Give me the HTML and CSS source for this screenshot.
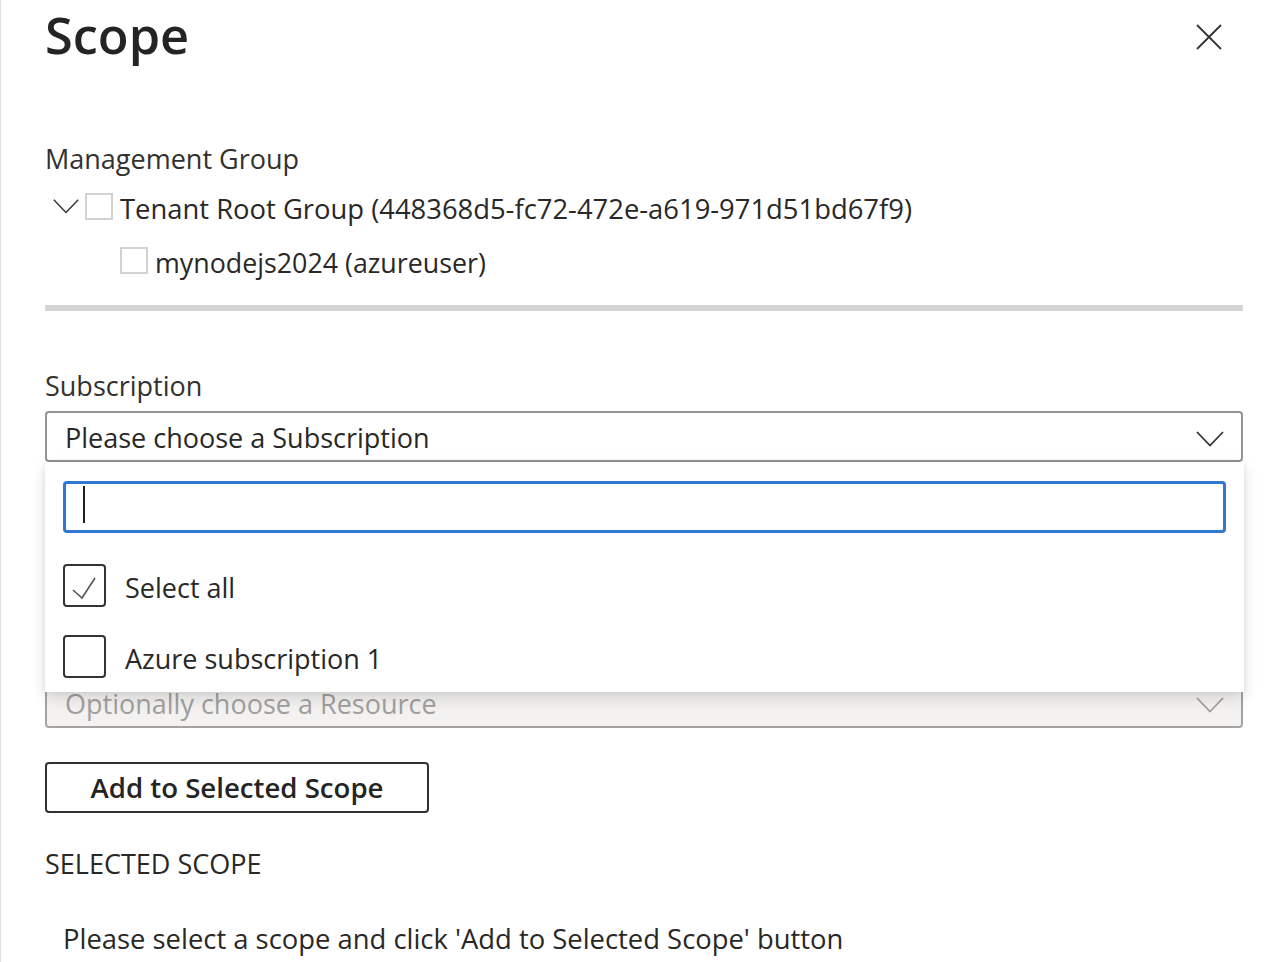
FILE: index.html
```html
<!DOCTYPE html>
<html lang="en">
<head>
<meta charset="utf-8">
<title>Scope</title>
<link rel="stylesheet" href="styles.css">
</head>
<body>
<div class="panel">
  <header class="header">
    <h1 class="title">Scope</h1>
    <button class="close" aria-label="Close">
      <svg width="26" height="26" viewBox="0 0 26 26"><path d="M1 1 L25 25 M25 1 L1 25" stroke="#333" stroke-width="1.8" fill="none"/></svg>
    </button>
  </header>

  <section class="mg">
    <div class="label">Management Group</div>
    <div class="tree">
      <div class="tree-row">
        <span class="toggle"><svg width="26" height="15" viewBox="0 0 26 15"><polyline points="0.8,0.8 13,13.5 25.2,0.8" stroke="#333" stroke-width="1.4" fill="none"/></svg></span>
        <span class="tcheck"></span>
        <span class="ttext">Tenant Root Group (448368d5-fc72-472e-a619-971d51bd67f9)</span>
      </div>
      <div class="tree-row child">
        <span class="tcheck"></span>
        <span class="ttext">mynodejs2024 (azureuser)</span>
      </div>
    </div>
  </section>

  <div class="separator"></div>

  <section class="field first">
    <div class="label">Subscription</div>
    <div class="combo">
      <div class="select">
        <span class="select-text">Please choose a Subscription</span>
        <svg class="chev" width="28" height="16" viewBox="0 0 28 16"><polyline points="1,1 14,14.5 27,1" stroke="#333" stroke-width="1.8" fill="none"/></svg>
      </div>
      <div class="dropdown">
        <div class="search"><span class="caret"></span></div>
        <div class="option">
          <span class="box checked"><svg width="39" height="39" viewBox="0 0 39 39"><polyline points="8,24 17,32 30,12" stroke="#555" stroke-width="1.6" fill="none"/></svg></span>
          <span class="opt-text">Select all</span>
        </div>
        <div class="option">
          <span class="box"></span>
          <span class="opt-text">Azure subscription 1</span>
        </div>
      </div>
    </div>
  </section>

  <section class="field resource">
    <div class="select disabled">
      <span class="select-text">Optionally choose a Resource</span>
      <svg class="chev" width="28" height="16" viewBox="0 0 28 16"><polyline points="1,1 14,14.5 27,1" stroke="#a19f9d" stroke-width="1.8" fill="none"/></svg>
    </div>
  </section>

  <button class="add-btn">Add to Selected Scope</button>

  <div class="section-head">SELECTED SCOPE</div>
  <p class="hint">Please select a scope and click 'Add to Selected Scope' button</p>
</div>
</body>
</html>
```

FILE: styles.css
```css
* { box-sizing: border-box; }

html, body {
  margin: 0;
  padding: 0;
  background: #ffffff;
}

body {
  font-family: "Open Sans", "Noto Sans", Arial, sans-serif;
  font-size: 27px;
  line-height: 36px;
  color: #292827;
}

.panel {
  border-left: 1px solid #e1e1e1;
  min-height: 962px;
  padding: 5px 35px 0 44px;
}

.header {
  display: flex;
  justify-content: space-between;
  align-items: flex-start;
}

.title {
  margin: 0;
  font-size: 50.5px;
  line-height: 60px;
  font-weight: 600;
  color: #252423;
}

.close {
  margin: 19px 21px 0 0;
  padding: 0;
  border: none;
  background: none;
  width: 26px;
  height: 26px;
  display: flex;
}

.mg { margin-top: 76px; }

.label {
  line-height: 36px;
  color: #323130;
}

.tree { margin-top: 14px; }

.tree-row {
  display: flex;
  align-items: flex-start;
  height: 36px;
}

.tree-row.child {
  margin-top: 18px;
  padding-left: 75px;
}

.toggle {
  width: 26px;
  height: 15px;
  margin: 8px 0 0 8px;
  display: flex;
}

.tcheck {
  width: 28px;
  height: 27px;
  margin-top: 2px;
  margin-left: 6px;
  border: 2px solid #d2d2d2;
  background: #fff;
  flex: none;
}

.tree-row.child .tcheck { margin-left: 0; }

.ttext {
  margin-left: 7px;
  white-space: nowrap;
  font-size: 27.4px;
}

.tree-row.child .ttext { font-size: 26.8px; }

.separator {
  margin-top: 24px;
  height: 6px;
  background: #d4d4d4;
}

.field.first { margin-top: 57px; }
.field.resource { padding-top: 208px; }

.combo { position: relative; }

.select {
  margin-top: 7px;
  height: 51px;
  border: 2px solid #939393;
  border-radius: 4px;
  padding: 3px 17px 0 18px;
  display: flex;
  justify-content: space-between;
  align-items: flex-start;
  background: #fff;
}

.select-text {
  line-height: 43px;
  white-space: nowrap;
}

.chev {
  margin-top: 15px;
  flex: none;
}

.select.disabled {
  background: #f3f2f1;
  border-color: #a3a3a3;
  color: #a19f9d;
}

.dropdown {
  position: absolute;
  top: 100%;
  left: 0;
  width: 1199px;
  height: 230px;
  background: #fff;
  box-shadow: 0 6px 14px rgba(0, 0, 0, 0.13), 0 0 5px rgba(0, 0, 0, 0.07);
  padding: 19px 18px 0 18px;
  z-index: 5;
}

.search {
  height: 52px;
  border: 3px solid #3178d2;
  border-radius: 4px;
  position: relative;
}

.caret {
  position: absolute;
  left: 17px;
  top: 2px;
  width: 2px;
  height: 37px;
  background: #1e1e1e;
}

.option {
  display: flex;
  align-items: flex-start;
  height: 43px;
  margin-top: 28px;
}

.search + .option { margin-top: 31px; }

.box {
  width: 43px;
  height: 43px;
  border: 2px solid #333;
  border-radius: 4px;
  flex: none;
  display: flex;
}

.opt-text {
  margin: 6px 0 0 19px;
  white-space: nowrap;
}

.add-btn {
  display: block;
  margin-top: 34px;
  width: 384px;
  height: 51px;
  border: 2px solid #323130;
  border-radius: 4px;
  background: #fff;
  font-family: inherit;
  font-size: 27.6px;
  font-weight: 600;
  line-height: 47px;
  color: #252423;
  padding: 0;
  text-align: center;
}

.section-head {
  margin-top: 33px;
  line-height: 36px;
  color: #292827;
}

.hint {
  margin: 39px 0 0 18px;
  line-height: 36px;
  font-size: 27.4px;
}
```
